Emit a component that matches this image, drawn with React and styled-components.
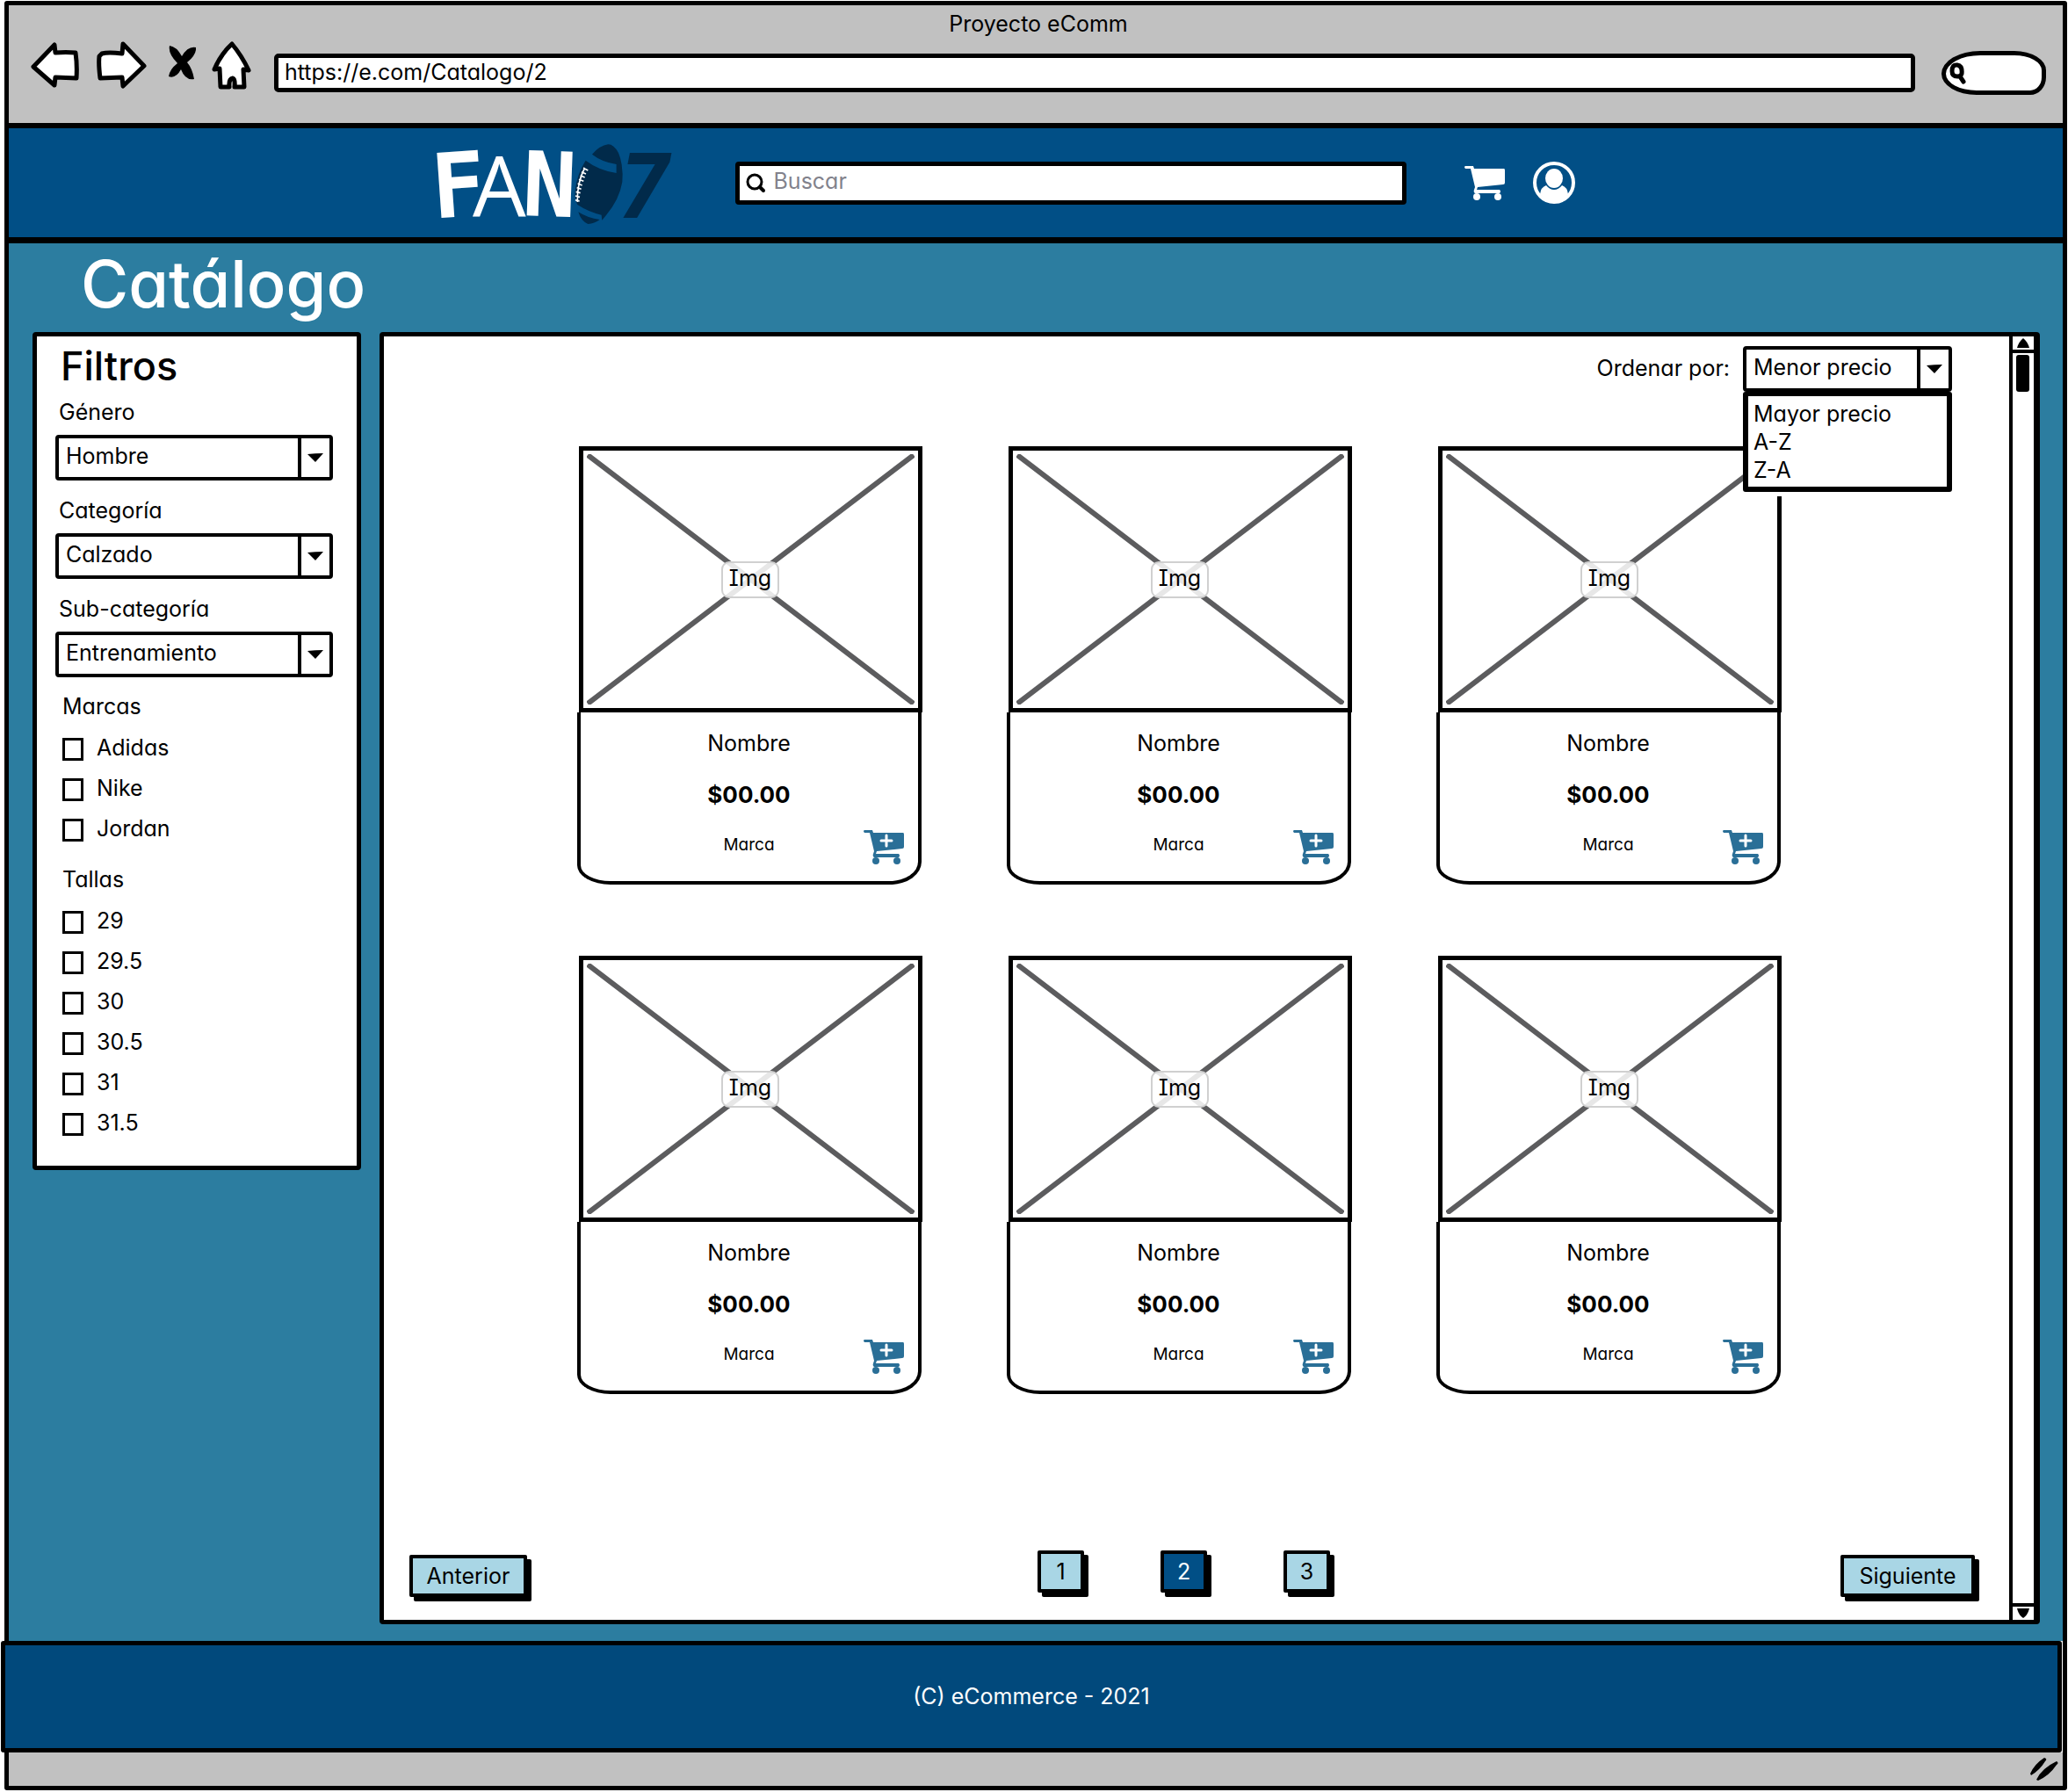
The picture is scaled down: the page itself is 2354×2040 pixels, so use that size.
import React from "react";
import styled, { createGlobalStyle } from "styled-components";

const color = {
  ink: "#000000",
  chrome: "#c1c1c1",
  header: "#014f86",
  page: "#2c7da0",
  footer: "#01497c",
  navy: "#012a4a",
  accent: "#2a6f97",
  light: "#a9d6e5",
  muted: "#82828c",
  cross: "#5c5c5e",
};

const GlobalStyle = createGlobalStyle`
  *, *::before, *::after { box-sizing: border-box; }
  body {
    margin: 0;
    background: #ffffff;
    color: ${color.ink};
    font: 400 25px/32px Inter, "Open Sans", sans-serif;
    font-feature-settings: "cv11" 1, "cv08" 1;
  }
  h1, h2, ul, p, fieldset, figure { margin: 0; padding: 0; border: 0; }
  ul { list-style: none; }
  button, input, select { font: inherit; font-feature-settings: inherit; color: inherit; margin: 0; }
  button { cursor: pointer; }
  svg { display: block; }
`;

const Page = styled.div`
  display: flex;
  min-height: 100vh;
  padding: 1px 1px 2px 5px;
`;

const BrowserWindow = styled.div`
  display: flex;
  flex: 1;
  flex-direction: column;
  min-width: 0;
  border: 5px solid ${color.ink};
  border-radius: 3px;
`;

const Chrome = styled.div`
  padding: 5px 19px 17px 25px;
  border-bottom: 6px solid ${color.ink};
  background: ${color.chrome};
`;

const WindowTitle = styled.p`
  text-align: center;
`;

const Toolbar = styled.div`
  display: flex;
  align-items: center;
  height: 80px;
`;

const NavButtons = styled.div`
  display: flex;
  align-items: center;
  gap: 18px;
  padding-bottom: 18px;
  margin-right: 26px;
`;

const IconButton = styled.button`
  flex: none;
  padding: 0;
  border: 0;
  background: none;
`;

const AddressInput = styled.input`
  flex: 1;
  min-width: 0;
  height: 44px;
  margin-right: 30px;
  padding: 0 7px 3px;
  border: 5px solid ${color.ink};
  border-radius: 5px;
  background: #ffffff;
`;

const QuickSearch = styled.label`
  display: flex;
  align-items: center;
  width: 119px;
  height: 50px;
  padding: 0 12px 0 3px;
  border: 5px solid ${color.ink};
  border-radius: 44px 36px 18px 40px / 26px 22px 20px 24px;
  background: #ffffff;
`;

const PlainInput = styled.input`
  flex: 1;
  min-width: 0;
  padding: 0 0 4px;
  border: 0;
  outline: 0;
  background: none;

  &::placeholder {
    color: ${color.muted};
    opacity: 1;
  }
`;

const Header = styled.header`
  display: flex;
  align-items: center;
  justify-content: center;
  height: 131px;
  padding-right: 70px;
  border-bottom: 7px solid ${color.ink};
  background: ${color.header};
`;

const LogoLink = styled.a`
  flex: none;
  margin-right: 69px;
`;

const SiteSearch = styled.label`
  display: flex;
  flex: 0 1 764px;
  align-items: center;
  gap: 9px;
  height: 49px;
  margin-right: 66px;
  padding: 0 6px;
  border: 5px solid ${color.ink};
  border-radius: 4px;
  background: #ffffff;
`;

const HeaderActions = styled.div`
  display: flex;
  align-items: center;
  gap: 32px;
`;

const Main = styled.main`
  display: flex;
  flex: 1;
  flex-direction: column;
  padding: 0 26px 19px 27px;
  background: ${color.page};
`;

const PageTitle = styled.h1`
  margin-bottom: 9px;
  padding-left: 55px;
  color: #ffffff;
  font-size: 74px;
  font-weight: 500;
  line-height: 92px;
`;

const Columns = styled.div`
  display: grid;
  flex: 1;
  grid-template-columns: 374px minmax(0, 1fr);
  gap: 21px;
`;

const Sidebar = styled.aside`
  align-self: start;
  padding: 0 27px 24px 21px;
  border: 5px solid ${color.ink};
  border-radius: 4px;
  background: #ffffff;
`;

const SidebarTitle = styled.h2`
  padding-left: 6px;
  font-size: 45px;
  font-weight: 500;
  line-height: 67px;
`;

const Filters = styled.form`
  display: flex;
  flex-direction: column;
  gap: 15px;
`;

const Field = styled.div`
  display: flex;
  flex-direction: column;
  gap: 8px;
`;

const FieldLabel = styled.label`
  padding: 1px 0 0 4px;
  line-height: 36px;
`;

const SelectBox = styled.div`
  position: relative;
  display: grid;
  grid-template-columns: minmax(0, 1fr) 36px;
  width: ${(p) => p.$width || "auto"};
  height: 52px;
  border: 4px solid ${color.ink};
  border-radius: 4px;
  background: #ffffff;
`;

const Select = styled.select`
  grid-area: 1 / 1 / 2 / 3;
  padding: 0 38px 4px 8px;
  border: 0;
  outline: 0;
  background: none;
  appearance: none;
`;

const SelectArrow = styled.span`
  display: grid;
  grid-area: 1 / 2 / 2 / 3;
  place-items: center;
  border-left: 4px solid ${color.ink};
  pointer-events: none;
`;

const CheckGroup = styled.fieldset`
  min-width: 0;
`;

const GroupLegend = styled.legend`
  margin-bottom: 8px;
  padding: 0 0 0 8px;
  line-height: 36px;
`;

const CheckRow = styled.label`
  display: flex;
  align-items: center;
  gap: 15px;
  height: 46px;
  padding-left: 8px;
`;

const Checkbox = styled.input`
  width: 24px;
  height: 26px;
  border: 3px solid ${color.ink};
  background: #ffffff;
  appearance: none;

  &:checked {
    background: ${color.accent};
  }
`;

const CheckText = styled.span`
  padding-bottom: 4px;
`;

const Panel = styled.section`
  display: grid;
  grid-template-columns: minmax(0, 1fr) 28px;
  border: 5px solid ${color.ink};
  border-right-width: 7px;
  border-radius: 4px;
  background: #ffffff;
`;

const Catalog = styled.div`
  display: flex;
  flex-direction: column;
  padding: 11px 39px 26px 29px;
`;

const SortBar = styled.div`
  display: flex;
  align-items: center;
  justify-content: flex-end;
  gap: 15px;
  margin-bottom: 62px;
  padding-right: 26px;
`;

const SortLabel = styled.label`
  padding-bottom: 2px;
`;

const Menu = styled.ul`
  position: absolute;
  top: 48px;
  right: -4px;
  left: -4px;
  z-index: 1;
  padding: 4px 0 3px;
  border: 6px solid ${color.ink};
  border-top-width: 5px;
  border-radius: 3px;
  background: #ffffff;
  box-shadow: 0 5px 0 #ffffff;
`;

const MenuItem = styled.button`
  display: block;
  width: 100%;
  height: 32px;
  padding: 0 6px;
  border: 0;
  background: none;
  text-align: left;
`;

const ProductGrid = styled.ul`
  display: grid;
  grid-template-columns: repeat(3, 391px);
  gap: 81px 98px;
  justify-content: center;
  padding-right: 28px;
`;

const Card = styled.li`
  display: flex;
  flex-direction: column;
`;

const Picture = styled.figure`
  display: grid;
  height: 303px;
  padding: 4px;
  border: 5px solid ${color.ink};
`;

const Cross = styled.svg`
  grid-area: 1 / 1;
  width: 100%;
  height: 100%;
`;

const PictureLabel = styled.figcaption`
  grid-area: 1 / 1;
  place-self: center;
  z-index: 0;
  width: 66px;
  height: 42px;
  border: 2px solid #d0d0d0;
  border-radius: 9px;
  background: rgba(255, 255, 255, 0.85);
  line-height: 34px;
  text-align: center;
`;

const CardBody = styled.div`
  display: grid;
  grid-template-columns: 1fr auto 1fr;
  grid-template-rows: 58px 60px 1fr;
  height: 196px;
  margin: 0 1px 0 -2px;
  padding: 7px 16px 12px;
  border: 4px solid ${color.ink};
  border-top: 0;
  border-radius: 0 0 36px 38px / 0 0 26px 22px;
`;

const ProductName = styled.p`
  grid-area: 1 / 2;
  padding-top: 12px;
  text-align: center;
`;

const Price = styled.p`
  grid-area: 2 / 2;
  padding-top: 13px;
  font-size: 26px;
  font-weight: 700;
  text-align: center;
`;

const Brand = styled.p`
  grid-area: 3 / 2;
  padding-top: 10px;
  font-size: 19px;
  text-align: center;
`;

const AddButton = styled(IconButton)`
  grid-area: 3 / 3;
  place-self: start end;
  padding-top: 9px;
`;

const Pager = styled.nav`
  display: flex;
  justify-content: space-between;
  height: 53px;
  margin-top: auto;
`;

const PageNumbers = styled.div`
  display: flex;
  gap: 87px;
`;

const PageButton = styled.button`
  align-self: ${(p) => (p.$step ? "flex-end" : "flex-start")};
  width: ${(p) => p.$width || "53px"};
  height: 48px;
  padding: 0;
  border: 4px solid ${color.ink};
  border-radius: 2px;
  background: ${(p) => (p.$current ? color.header : color.light)};
  box-shadow: 5px 5px 0 ${color.ink};
  color: ${(p) => (p.$current ? "#ffffff" : color.ink)};
`;

const ScrollTrack = styled.div`
  display: flex;
  flex-direction: column;
  align-items: stretch;
  border-left: 4px solid ${color.ink};
`;

const ScrollButton = styled.button`
  display: grid;
  height: 19px;
  padding: 0;
  place-items: center;
  border: 0 solid ${color.ink};
  border-width: ${(p) => (p.$end ? "4px 0 0" : "0 0 4px")};
  background: none;
`;

const ScrollThumb = styled.div`
  width: 15px;
  height: 42px;
  margin: 2px 4px auto;
  border-radius: 3px;
  background: ${color.ink};
`;

const Footer = styled.footer`
  margin: 0 1px 0 -9px;
  padding: 42px 0 43px;
  border: 5px solid ${color.ink};
  border-radius: 3px;
  background: ${color.footer};
  color: #ffffff;
  text-align: center;
`;

const StatusBar = styled.div`
  display: flex;
  align-items: center;
  justify-content: flex-end;
  height: 38px;
  padding-right: 5px;
  background: ${color.chrome};
`;

const outline = {
  fill: "#ffffff",
  stroke: color.ink,
  strokeWidth: 5,
  strokeLinejoin: "round",
  strokeLinecap: "round",
};

const BackIcon = () => (
  <svg width="56" height="52" viewBox="0 0 56 52" {...outline}>
    <path d="M3 28 27 3 28 12Q40 11 51 12Q53 26 52 41L28 40 27 49Z" />
  </svg>
);

const ForwardIcon = () => (
  <svg width="60" height="54" viewBox="0 0 60 54" {...outline}>
    <path d="M7 14Q14 12 30 14L31 3 55 28 31 51 30 41 5 42Q3 26 4 17Z" />
  </svg>
);

const StopIcon = () => (
  <svg width="36" height="44" viewBox="0 0 36 44" fill={color.ink}>
    <path d="M6 0Q14 1 20 12Q27 0 36 2Q37 10 26 19Q32 26 34 38Q24 40 19 27Q13 38 5 35Q6 27 15 20Q4 9 6 0Z" />
  </svg>
);

const HomeIcon = () => (
  <svg width="45" height="55" viewBox="0 0 45 55" {...outline}>
    <path d="M23 3Q34 16 42 33L36 32 37 52 26 52Q27 43 24 42Q19 43 20 52L10 52 9 31 3 32Q10 15 23 3Z" />
  </svg>
);

const SearchIcon = ({ size = 24 }) => (
  <svg width={size} height={size} viewBox="0 0 24 24" fill="none" stroke={color.ink} strokeLinecap="round">
    <circle cx="11" cy="11" r="8" strokeWidth="3" />
    <path d="M17 17 21 21" strokeWidth="4" />
  </svg>
);

const QuickSearchIcon = () => (
  <svg width="20" height="30" viewBox="0 0 20 30" fill="none" stroke={color.ink} strokeLinecap="round">
    <path d="M4 13Q4 5 10 6Q16 7 15 16Q14 19 10 19Q4 19 4 13ZM13 19 17 25" strokeWidth="5" />
  </svg>
);

const CartIcon = ({ fill, plus }) => (
  <svg width="46" height="39" viewBox="0 0 46 39" fill={fill}>
    <path d="M1 0H10L11 3H45Q46 3 46 5V19Q46 21 44 21L15 24 14 27H40Q42 29 40 31H12Q10 30 11 27L12 24 7 3H1Q-1 1 1 0Z" />
    <circle cx="14" cy="35" r="4" />
    <circle cx="38" cy="35" r="4" />
    {plus && <path d="M26 6V18M20 12H32" stroke="#ffffff" strokeWidth="3" strokeLinecap="round" />}
  </svg>
);

const UserIcon = () => (
  <svg width="48" height="49" viewBox="0 0 48 49" fill="#ffffff">
    <circle cx="24" cy="24" r="22" fill="none" stroke="#ffffff" strokeWidth="4" />
    <ellipse cx="24" cy="19" rx="10" ry="11" />
    <path d="M8 37Q9 29 15 27Q19 32 24 32Q29 32 33 27Q39 29 40 37Q34 46 24 46Q14 46 8 37Z" />
  </svg>
);

const DownArrow = () => (
  <svg width="18" height="10" viewBox="0 0 18 10" fill={color.ink}>
    <path d="M0 1Q9 0 18 0L9 10Z" />
  </svg>
);

const ScrollArrow = ({ down }) => (
  <svg width="14" height="11" viewBox="0 0 14 11" fill={color.ink}>
    <path d={down ? "M0 0H14Q12 8 7 11Q2 8 0 0Z" : "M0 11Q2 4 7 0Q12 4 14 11Z"} />
  </svg>
);

const GripIcon = () => (
  <svg width="32" height="27" viewBox="0 0 32 27" fill={color.ink}>
    <path d="M0 18Q5 7 16 0Q20 1 17 4Q11 14 1 20Z" />
    <path d="M7 25Q13 12 30 4Q33 6 30 8Q22 20 9 26Z" />
  </svg>
);

const Logo = () => (
  <svg width="272" height="92" viewBox="0 0 272 92" overflow="visible" role="img" aria-label="FAN 07">
    <g fontFamily="'DejaVu Sans Mono', monospace" fill="#ffffff">
      <text x="-5" y="85" fontSize="102" fontWeight="700" transform="rotate(-4 20 50)">F</text>
      <text x="42" y="85" fontFamily="'Open Sans', sans-serif" fontSize="96">A</text>
      <text x="99" y="84" fontSize="102" fontWeight="700" transform="rotate(2 130 50)">N</text>
      <text x="208" y="86" fontSize="101" fontWeight="700" fontStyle="italic" fill={color.navy}>7</text>
    </g>
    <g transform="translate(-36 -32) scale(0.3333)" fill={color.navy}>
      <path d="M642 137Q668 107 697 103Q716 103 732 132Q739 148 743 172Q748 205 745 232Q735 292 690 345L676 362 674 344Q630 334 592 309Q582 290 584 262Q590 205 620 158Q665 192 725 201L725 171Q675 163 642 137Z" />
      <path d="M595 334Q627 355 668 360Q650 374 628 375Q604 365 595 334Z" />
      <path
        d="M617 183Q590 235 592 300M612 184 628 192M606 197 621 204M602 209 617 216M597 223 613 229M593 237 608 243M590 251 605 256M587 265 602 269M585 279 600 283M585 293 599 297"
        fill="none"
        stroke="#ffffff"
        strokeWidth="5"
      />
    </g>
  </svg>
);

const fields = [
  { id: "genero", label: "Género", options: ["Hombre", "Mujer"] },
  { id: "categoria", label: "Categoría", options: ["Calzado", "Ropa"] },
  { id: "subcategoria", label: "Sub-categoría", options: ["Entrenamiento", "Casual"] },
];

const groups = [
  { title: "Marcas", items: ["Adidas", "Nike", "Jordan"] },
  { title: "Tallas", items: ["29", "29.5", "30", "30.5", "31", "31.5"] },
];

const products = Array.from({ length: 6 }, (_, i) => ({
  id: i + 1,
  name: "Nombre",
  price: "$00.00",
  brand: "Marca",
}));

const Dropdown = ({ id, options, width, children }) => (
  <SelectBox $width={width}>
    <Select id={id} defaultValue={options[0]}>
      {options.map((o) => (
        <option key={o}>{o}</option>
      ))}
    </Select>
    <SelectArrow>
      <DownArrow />
    </SelectArrow>
    {children}
  </SelectBox>
);

const ProductCard = ({ product }) => (
  <Card>
    <Picture>
      <Cross viewBox="0 0 373 285" preserveAspectRatio="none" stroke={color.cross} strokeWidth="6">
        <path d="M1 1 372 284M372 1 1 284" />
      </Cross>
      <PictureLabel>Img</PictureLabel>
    </Picture>
    <CardBody>
      <ProductName>{product.name}</ProductName>
      <Price>{product.price}</Price>
      <Brand>{product.brand}</Brand>
      <AddButton type="button" aria-label="Agregar al carrito">
        <CartIcon fill={color.accent} plus />
      </AddButton>
    </CardBody>
  </Card>
);

export default function App() {
  return (
    <Page>
      <GlobalStyle />
      <BrowserWindow>
        <Chrome>
          <WindowTitle>Proyecto eComm</WindowTitle>
          <Toolbar>
            <NavButtons>
              <IconButton type="button" aria-label="Atrás"><BackIcon /></IconButton>
              <IconButton type="button" aria-label="Adelante"><ForwardIcon /></IconButton>
              <IconButton type="button" aria-label="Detener"><StopIcon /></IconButton>
              <IconButton type="button" aria-label="Inicio"><HomeIcon /></IconButton>
            </NavButtons>
            <AddressInput type="text" aria-label="Dirección" defaultValue="https://e.com/Catalogo/2" />
            <QuickSearch>
              <QuickSearchIcon />
              <PlainInput type="text" aria-label="Búsqueda rápida" />
            </QuickSearch>
          </Toolbar>
        </Chrome>

        <Header>
          <LogoLink href="#inicio"><Logo /></LogoLink>
          <SiteSearch>
            <SearchIcon />
            <PlainInput type="text" aria-label="Buscar" placeholder="Buscar" />
          </SiteSearch>
          <HeaderActions>
            <IconButton type="button" aria-label="Carrito"><CartIcon fill="#ffffff" /></IconButton>
            <IconButton type="button" aria-label="Cuenta"><UserIcon /></IconButton>
          </HeaderActions>
        </Header>

        <Main>
          <PageTitle>Catálogo</PageTitle>
          <Columns>
            <Sidebar>
              <SidebarTitle>Filtros</SidebarTitle>
              <Filters>
                {fields.map((f) => (
                  <Field key={f.id}>
                    <FieldLabel htmlFor={f.id}>{f.label}</FieldLabel>
                    <Dropdown id={f.id} options={f.options} />
                  </Field>
                ))}
                {groups.map((g) => (
                  <CheckGroup key={g.title}>
                    <GroupLegend>{g.title}</GroupLegend>
                    {g.items.map((item) => (
                      <CheckRow key={item}>
                        <Checkbox type="checkbox" />
                        <CheckText>{item}</CheckText>
                      </CheckRow>
                    ))}
                  </CheckGroup>
                ))}
              </Filters>
            </Sidebar>

            <Panel>
              <Catalog>
                <SortBar>
                  <SortLabel htmlFor="orden">Ordenar por:</SortLabel>
                  <Dropdown id="orden" width="238px" options={["Menor precio", "Mayor precio", "A-Z", "Z-A"]}>
                    <Menu>
                      {["Mayor precio", "A-Z", "Z-A"].map((o) => (
                        <li key={o}>
                          <MenuItem type="button">{o}</MenuItem>
                        </li>
                      ))}
                    </Menu>
                  </Dropdown>
                </SortBar>
                <ProductGrid>
                  {products.map((p) => (
                    <ProductCard key={p.id} product={p} />
                  ))}
                </ProductGrid>
                <Pager aria-label="Paginación">
                  <PageButton type="button" $step $width="134px">Anterior</PageButton>
                  <PageNumbers>
                    {[1, 2, 3].map((n) => (
                      <PageButton key={n} type="button" $current={n === 2}>{n}</PageButton>
                    ))}
                  </PageNumbers>
                  <PageButton type="button" $step $width="153px">Siguiente</PageButton>
                </Pager>
              </Catalog>
              <ScrollTrack>
                <ScrollButton type="button" aria-label="Subir"><ScrollArrow /></ScrollButton>
                <ScrollThumb />
                <ScrollButton type="button" aria-label="Bajar" $end><ScrollArrow down /></ScrollButton>
              </ScrollTrack>
            </Panel>
          </Columns>
        </Main>

        <Footer>(C) eCommerce - 2021</Footer>
        <StatusBar><GripIcon /></StatusBar>
      </BrowserWindow>
    </Page>
  );
}
